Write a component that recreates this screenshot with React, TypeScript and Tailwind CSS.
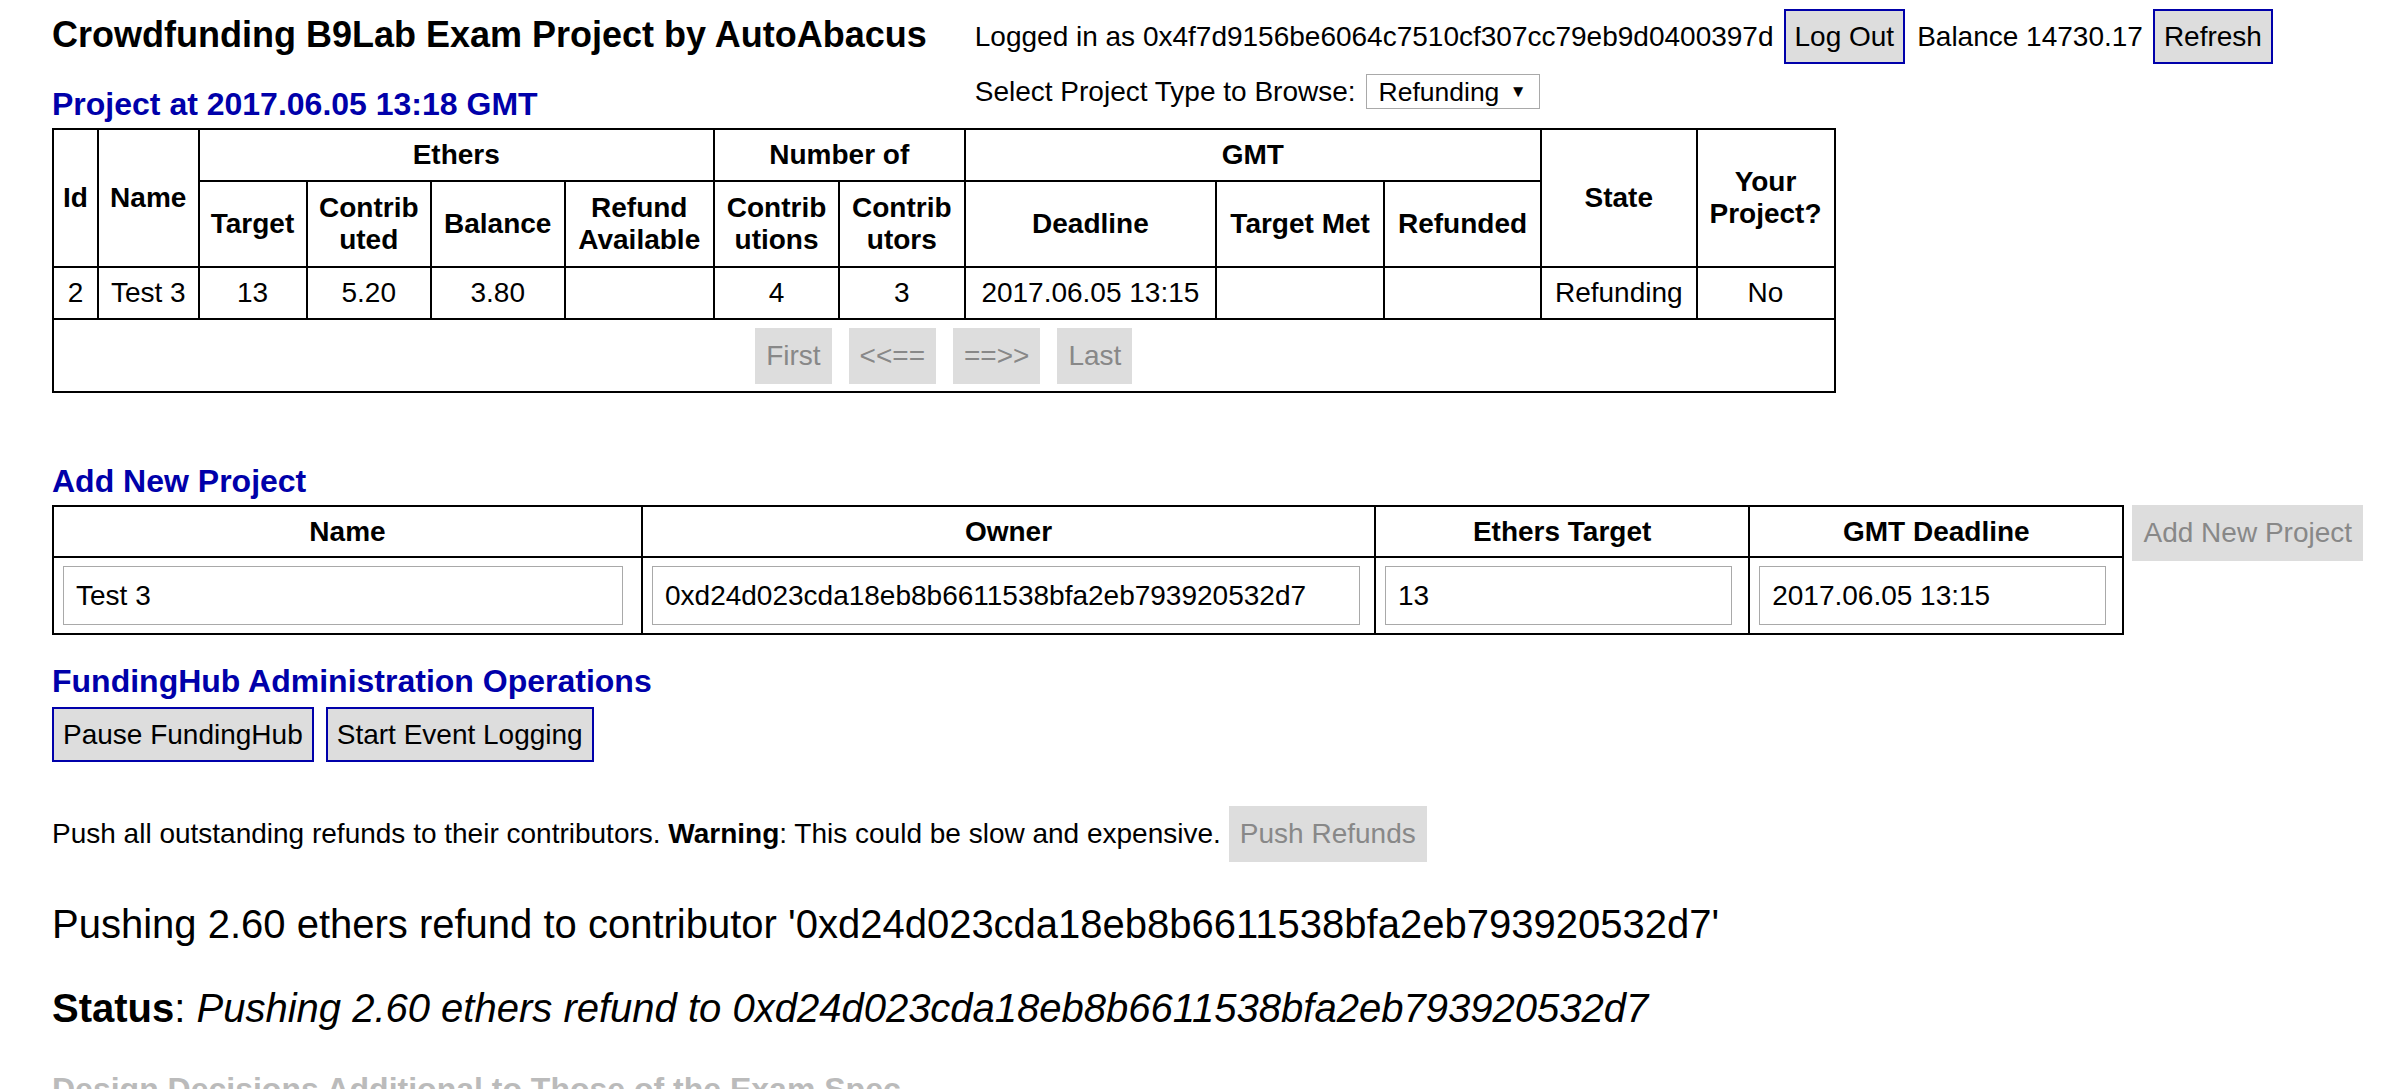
import React from "react";

const blueBtn =
  "border-2 border-[#0000aa] bg-[#dddddd] px-[9px] py-[9.5px] text-[28px] leading-[32px] text-black whitespace-nowrap";
const grayBtn =
  "bg-[#dddddd] px-[11px] py-[12px] text-[28px] leading-[32px] text-[#888888] whitespace-nowrap";
const th = "border-2 border-black px-[9px] text-center align-middle font-bold whitespace-nowrap";
const td = "border-2 border-black px-[9px] text-center align-middle font-normal whitespace-nowrap";

export default function App() {
  const cols = [45, 100.5, 108, 124.5, 133.5, 149.5, 125, 125.5, 251.7, 167.8, 157, 155.5, 138];
  const addCols = [589, 733, 374.2, 374.3];
  return (
    <div className="min-h-screen bg-white pl-[52px] font-['Liberation_Sans',Arial,sans-serif] text-[28px] leading-[32px] text-black">
      <div className="flex items-start">
        <div>
          <h1 className="pt-[14px] text-[36px] leading-[41px] font-bold whitespace-nowrap">
            Crowdfunding B9Lab Exam Project by AutoAbacus
          </h1>
          <h2 className="mt-[31px] text-[32px] leading-[37px] font-bold text-[#0000aa] whitespace-nowrap">
            Project at 2017.06.05 13:18 GMT
          </h2>
        </div>
        <div className="ml-[48px] pt-[9px]">
          <div className="flex h-[55px] items-center whitespace-nowrap">
            <span>Logged in as 0x4f7d9156be6064c7510cf307cc79eb9d0400397d</span>
            <button className={`${blueBtn} ml-[10px]`}>Log Out</button>
            <span className="ml-[12px]">Balance 14730.17</span>
            <button className={`${blueBtn} ml-[10px]`}>Refresh</button>
          </div>
          <div className="mt-[10px] flex items-center whitespace-nowrap">
            <span>Select Project Type to Browse:</span>
            <div className="ml-[10px] flex h-[35px] w-[174px] items-center border border-[#a9a9a9] bg-white pl-[12px] pr-[12px]">
              <span className="text-[26.5px] leading-[30px]">Refunding</span>
              <span className="ml-auto text-[17px] leading-[17px]">▼</span>
            </div>
          </div>
        </div>
      </div>

      <table className="mt-[5px] table-fixed border-collapse" style={{ width: 1783 }}>
        <colgroup>
          {cols.map((w, i) => (
            <col key={i} style={{ width: w }} />
          ))}
        </colgroup>
        <thead>
          <tr className="h-[52px]">
            <th rowSpan={2} className={th}>Id</th>
            <th rowSpan={2} className={th}>Name</th>
            <th colSpan={4} className={th}>Ethers</th>
            <th colSpan={2} className={th}>Number of</th>
            <th colSpan={3} className={th}>GMT</th>
            <th rowSpan={2} className={th}>State</th>
            <th rowSpan={2} className={th}>
              Your
              <br />
              Project?
            </th>
          </tr>
          <tr className="h-[86px]">
            <th className={th}>Target</th>
            <th className={th}>
              Contrib
              <br />
              uted
            </th>
            <th className={th}>Balance</th>
            <th className={th}>
              Refund
              <br />
              Available
            </th>
            <th className={th}>
              Contrib
              <br />
              utions
            </th>
            <th className={th}>
              Contrib
              <br />
              utors
            </th>
            <th className={th}>Deadline</th>
            <th className={th}>Target Met</th>
            <th className={th}>Refunded</th>
          </tr>
        </thead>
        <tbody>
          <tr className="h-[52px]">
            <td className={td}>2</td>
            <td className={td}>Test 3</td>
            <td className={td}>13</td>
            <td className={td}>5.20</td>
            <td className={td}>3.80</td>
            <td className={td}></td>
            <td className={td}>4</td>
            <td className={td}>3</td>
            <td className={td}>2017.06.05 13:15</td>
            <td className={td}></td>
            <td className={td}></td>
            <td className={td}>Refunding</td>
            <td className={td}>No</td>
          </tr>
          <tr className="h-[73px]">
            <td colSpan={13} className="border-2 border-black align-middle">
              <div className="flex justify-center gap-[17px]">
                <button className={grayBtn}>First</button>
                <button className={grayBtn}>&lt;&lt;==</button>
                <button className={grayBtn}>==&gt;&gt;</button>
                <button className={grayBtn}>Last</button>
              </div>
            </td>
          </tr>
        </tbody>
      </table>

      <h2 className="mt-[70px] text-[32px] leading-[37px] font-bold text-[#0000aa]">Add New Project</h2>
      <div className="mt-[5px] flex items-start gap-[8px]">
        <table className="table-fixed border-collapse" style={{ width: 2072 }}>
          <colgroup>
            {addCols.map((w, i) => (
              <col key={i} style={{ width: w }} />
            ))}
          </colgroup>
          <thead>
            <tr className="h-[51px]">
              <th className={th}>Name</th>
              <th className={th}>Owner</th>
              <th className={th}>Ethers Target</th>
              <th className={th}>GMT Deadline</th>
            </tr>
          </thead>
          <tbody>
            <tr className="h-[77px]">
              <td className="border-2 border-black px-[9px] text-left align-middle">
                <input
                  readOnly
                  value="Test 3"
                  className="h-[59px] w-[560px] border-[1.5px] border-[#a9a9a9] bg-white px-[12px] text-[28px] leading-[32px] text-black outline-none"
                />
              </td>
              <td className="border-2 border-black px-[9px] text-left align-middle">
                <input
                  readOnly
                  value="0xd24d023cda18eb8b6611538bfa2eb793920532d7"
                  className="h-[59px] w-[708px] border-[1.5px] border-[#a9a9a9] bg-white px-[12px] text-[28px] leading-[32px] text-black outline-none"
                />
              </td>
              <td className="border-2 border-black px-[9px] text-left align-middle">
                <input
                  readOnly
                  value="13"
                  className="h-[59px] w-[347px] border-[1.5px] border-[#a9a9a9] bg-white px-[12px] text-[28px] leading-[32px] text-black outline-none"
                />
              </td>
              <td className="border-2 border-black px-[9px] text-left align-middle">
                <input
                  readOnly
                  value="2017.06.05 13:15"
                  className="h-[59px] w-[347px] border-[1.5px] border-[#a9a9a9] bg-white px-[12px] text-[28px] leading-[32px] text-black outline-none"
                />
              </td>
            </tr>
          </tbody>
        </table>
        <button className={grayBtn}>Add New Project</button>
      </div>

      <h2 className="mt-[28px] text-[32px] leading-[37px] font-bold text-[#0000aa]">
        FundingHub Administration Operations
      </h2>
      <div className="mt-[7px] flex items-center gap-[12px]">
        <button className={blueBtn}>Pause FundingHub</button>
        <button className={blueBtn}>Start Event Logging</button>
      </div>

      <div className="mt-[44px] flex items-center whitespace-nowrap">
        <span>
          Push all outstanding refunds to their contributors. <b className="font-bold">Warning</b>: This could be slow
          and expensive.
        </span>
        <button className={`${grayBtn} ml-[8px]`}>Push Refunds</button>
      </div>

      <p className="mt-[39px] text-[40px] leading-[46px] whitespace-nowrap">
        Pushing 2.60 ethers refund to contributor '0xd24d023cda18eb8b6611538bfa2eb793920532d7'
      </p>

      <p className="mt-[38px] text-[40px] leading-[46px] whitespace-nowrap">
        <b className="font-bold">Status</b>: <i className="italic">Pushing 2.60 ethers refund to 0xd24d023cda18eb8b6611538bfa2eb793920532d7</i>
      </p>

      <h2 className="mt-[40px] pb-[40px] text-[32px] leading-[37px] font-bold text-[#bbbbbb] whitespace-nowrap">
        Design Decisions Additional to Those of the Exam Spec
      </h2>
    </div>
  );
}
